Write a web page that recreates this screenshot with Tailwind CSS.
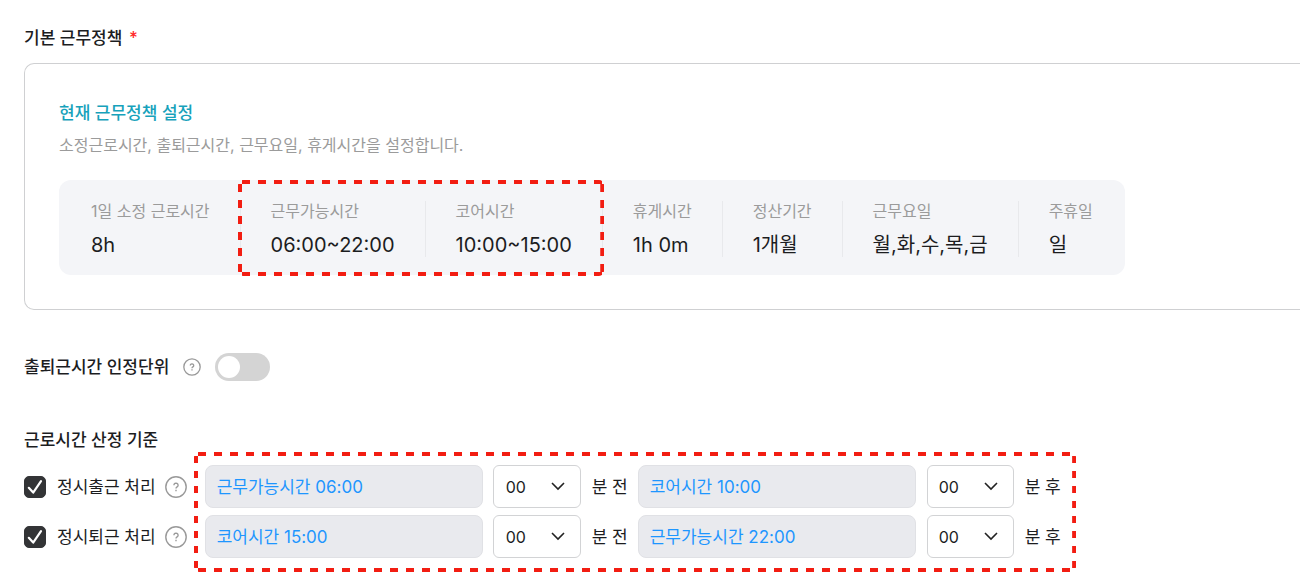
<!DOCTYPE html>
<html lang="ko">
<head>
  <meta charset="UTF-8">
  <meta name="viewport" content="width=device-width, initial-scale=1.0">
  <title>기본 근무정책</title>
  <script src="https://cdn.jsdelivr.net/npm/@tailwindcss/browser@4"></script>
</head>
<body class="bg-white text-[#1c1d1f] font-['Inter','Noto_Sans_CJK_KR',sans-serif] text-[17px] leading-6 pl-6 pt-[26px] overflow-x-hidden">
  <h2 class="font-medium">기본 근무정책 <span class="ml-0.5 text-[#ff2a2a]">*</span></h2>

  <section class="mt-[13px] border border-r-0 border-[#cfd0d2] rounded-l-[10px] pl-[34px] pt-[37px] pb-[34px]">
    <h3 class="font-medium text-[#17a2bb]">현재 근무정책 설정</h3>
    <p class="mt-2 text-base text-[#9b9b9b]">소정근로시간, 출퇴근시간, 근무요일, 휴게시간을 설정합니다.</p>
    <div class="mt-[23px] w-fit bg-[#f4f5f8] rounded-xl px-0.5 pt-[21px] pb-[18px] flex whitespace-nowrap">
      <dl class="px-[30px] border-r border-[#e8e9ec]">
        <dt class="text-base leading-5 text-[#9b9b9b]">1일 소정 근로시간</dt>
        <dd class="mt-3 text-xl leading-6">8h</dd>
      </dl>
      <div class="relative flex">
        <dl class="px-[30px] border-r border-[#e8e9ec]">
          <dt class="text-base leading-5 text-[#9b9b9b]">근무가능시간</dt>
          <dd class="mt-3 text-xl leading-6">06:00~22:00</dd>
        </dl>
        <dl class="px-[30px] border-r border-[#e8e9ec]">
          <dt class="text-base leading-5 text-[#9b9b9b]">코어시간</dt>
          <dd class="mt-3 text-xl leading-6">10:00~15:00</dd>
        </dl>
        <!-- stroke is 8px wide, the outer half is clipped -->
        <div class="absolute -top-[21px] -bottom-[19px] -left-[3px] -right-px rounded-[5px] overflow-hidden pointer-events-none">
          <svg class="size-full" stroke="#f21d12" stroke-width="8" stroke-dasharray="8 8">
            <line x1="4" y1="0" x2="100%" y2="0"/>
            <line x1="4" y1="100%" x2="100%" y2="100%"/>
            <line x1="0" y1="4" x2="0" y2="100%"/>
            <line x1="100%" y1="4" x2="100%" y2="100%"/>
          </svg>
        </div>
      </div>
      <dl class="px-[30px] border-r border-[#e8e9ec]">
        <dt class="text-base leading-5 text-[#9b9b9b]">휴게시간</dt>
        <dd class="mt-3 text-xl leading-6">1h 0m</dd>
      </dl>
      <dl class="px-[30px] border-r border-[#e8e9ec]">
        <dt class="text-base leading-5 text-[#9b9b9b]">정산기간</dt>
        <dd class="mt-3 text-xl leading-6">1개월</dd>
      </dl>
      <dl class="px-[30px] border-r border-[#e8e9ec]">
        <dt class="text-base leading-5 text-[#9b9b9b]">근무요일</dt>
        <dd class="mt-3 text-xl leading-6">월,화,수,목,금</dd>
      </dl>
      <dl class="px-[30px]">
        <dt class="text-base leading-5 text-[#9b9b9b]">주휴일</dt>
        <dd class="mt-3 text-xl leading-6">일</dd>
      </dl>
    </div>
  </section>

  <div class="mt-[43px] flex items-center">
    <label for="unit" class="font-medium">출퇴근시간 인정단위</label>
    <button type="button" aria-label="도움말" class="ml-3.5">
      <svg class="size-[18px]" viewBox="0 0 22 22" fill="none" stroke="#999" stroke-width="1.6"><circle cx="11" cy="11" r="10"/><path d="M8.9 9.2a2.1 2 0 1 1 3.2 1.7c-.8.5-1.1.8-1.1 1.5"/><path d="M11 13.7v1.5"/></svg>
    </button>
    <input type="checkbox" role="switch" id="unit" class="ml-3.5 appearance-none w-[55px] h-7 rounded-full bg-[#d4d4d4] p-[3px] before:block before:size-[22px] before:rounded-full before:bg-white checked:bg-[#17a2bb] checked:before:ml-auto">
  </div>

  <h2 class="mt-[47px] font-medium">근로시간 산정 기준</h2>

  <div class="flex items-start whitespace-nowrap">
    <div class="pt-[13px] flex flex-col gap-[7px]">
      <div class="h-[43px] flex items-center">
        <span class="relative flex mr-[11px]">
          <input type="checkbox" id="in" checked class="peer appearance-none size-[22px] rounded-[5px] border border-[#333436] checked:bg-[#333436]">
          <svg class="absolute inset-0 size-[22px] pointer-events-none hidden peer-checked:block" viewBox="0 0 22 22" fill="none" stroke="#fff" stroke-width="2.2" stroke-linecap="round" stroke-linejoin="round"><path d="M4.8 11.8l4.4 4.8L17 5.2"/></svg>
        </span>
        <label for="in">정시출근 처리</label>
        <button type="button" aria-label="정시출근 도움말" class="ml-[9px]">
          <svg class="size-[22px]" viewBox="0 0 22 22" fill="none" stroke="#999" stroke-width="1.4"><circle cx="11" cy="11" r="10.2"/><path d="M8.9 9.2a2.1 2 0 1 1 3.2 1.7c-.8.5-1.1.8-1.1 1.5"/><path d="M11 13.7v1.5"/></svg>
        </button>
      </div>
      <div class="h-[43px] flex items-center">
        <span class="relative flex mr-[11px]">
          <input type="checkbox" id="out" checked class="peer appearance-none size-[22px] rounded-[5px] border border-[#333436] checked:bg-[#333436]">
          <svg class="absolute inset-0 size-[22px] pointer-events-none hidden peer-checked:block" viewBox="0 0 22 22" fill="none" stroke="#fff" stroke-width="2.2" stroke-linecap="round" stroke-linejoin="round"><path d="M4.8 11.8l4.4 4.8L17 5.2"/></svg>
        </span>
        <label for="out">정시퇴근 처리</label>
        <button type="button" aria-label="정시퇴근 도움말" class="ml-[9px]">
          <svg class="size-[22px]" viewBox="0 0 22 22" fill="none" stroke="#999" stroke-width="1.4"><circle cx="11" cy="11" r="10.2"/><path d="M8.9 9.2a2.1 2 0 1 1 3.2 1.7c-.8.5-1.1.8-1.1 1.5"/><path d="M11 13.7v1.5"/></svg>
        </button>
      </div>
    </div>

    <div class="relative ml-[7px] pl-[11px] pr-[15px] pt-[13px] pb-3.5 flex flex-col gap-[7px]">
      <div class="flex items-center">
        <input type="text" disabled aria-label="정시출근 시작 기준" value="근무가능시간 06:00" class="w-[278px] h-[43px] rounded-lg border border-[#e0e1e5] bg-[#e9eaee] px-[11px] pb-0.5 text-[#1e96ff]">
        <span class="relative ml-2.5">
          <select id="in-before" class="appearance-none block w-[88px] h-[43px] rounded-md border border-[#d2d3d5] bg-white pl-3 text-base"><option>00</option><option>30</option></select>
          <svg class="absolute right-4 top-4 w-[14px] h-[10px] pointer-events-none" viewBox="0 0 14 10" fill="none" stroke="#222" stroke-width="1.6"><path d="M1 2l6 6 6-6"/></svg>
        </span>
        <label for="in-before" class="ml-[11px]">분 전</label>
        <input type="text" disabled aria-label="정시출근 종료 기준" value="코어시간 10:00" class="ml-2.5 w-[278px] h-[43px] rounded-lg border border-[#e0e1e5] bg-[#e9eaee] px-[11px] pb-0.5 text-[#1e96ff]">
        <span class="relative ml-[11px]">
          <select id="in-after" class="appearance-none block w-[87px] h-[43px] rounded-md border border-[#d2d3d5] bg-white pl-[11px] text-base"><option>00</option><option>30</option></select>
          <svg class="absolute right-4 top-4 w-[14px] h-[10px] pointer-events-none" viewBox="0 0 14 10" fill="none" stroke="#222" stroke-width="1.6"><path d="M1 2l6 6 6-6"/></svg>
        </span>
        <label for="in-after" class="ml-[11px]">분 후</label>
      </div>
      <div class="flex items-center">
        <input type="text" disabled aria-label="정시퇴근 시작 기준" value="코어시간 15:00" class="w-[278px] h-[43px] rounded-lg border border-[#e0e1e5] bg-[#e9eaee] px-[11px] pb-0.5 text-[#1e96ff]">
        <span class="relative ml-2.5">
          <select id="out-before" class="appearance-none block w-[88px] h-[43px] rounded-md border border-[#d2d3d5] bg-white pl-3 text-base"><option>00</option><option>30</option></select>
          <svg class="absolute right-4 top-4 w-[14px] h-[10px] pointer-events-none" viewBox="0 0 14 10" fill="none" stroke="#222" stroke-width="1.6"><path d="M1 2l6 6 6-6"/></svg>
        </span>
        <label for="out-before" class="ml-[11px]">분 전</label>
        <input type="text" disabled aria-label="정시퇴근 종료 기준" value="근무가능시간 22:00" class="ml-2.5 w-[278px] h-[43px] rounded-lg border border-[#e0e1e5] bg-[#e9eaee] px-[11px] pb-0.5 text-[#1e96ff]">
        <span class="relative ml-[11px]">
          <select id="out-after" class="appearance-none block w-[87px] h-[43px] rounded-md border border-[#d2d3d5] bg-white pl-[11px] text-base"><option>00</option><option>30</option></select>
          <svg class="absolute right-4 top-4 w-[14px] h-[10px] pointer-events-none" viewBox="0 0 14 10" fill="none" stroke="#222" stroke-width="1.6"><path d="M1 2l6 6 6-6"/></svg>
        </span>
        <label for="out-after" class="ml-[11px]">분 후</label>
      </div>
      <div class="absolute inset-0 rounded-[5px] overflow-hidden pointer-events-none">
        <svg class="size-full" stroke="#f21d12" stroke-width="8" stroke-dasharray="8 8">
          <line x1="4" y1="0" x2="100%" y2="0"/>
          <line x1="4" y1="100%" x2="100%" y2="100%"/>
          <line x1="0" y1="4" x2="0" y2="100%" stroke-dasharray="7 8"/>
          <line x1="100%" y1="4" x2="100%" y2="100%" stroke-dasharray="7 8"/>
        </svg>
      </div>
    </div>
  </div>
</body>
</html>
